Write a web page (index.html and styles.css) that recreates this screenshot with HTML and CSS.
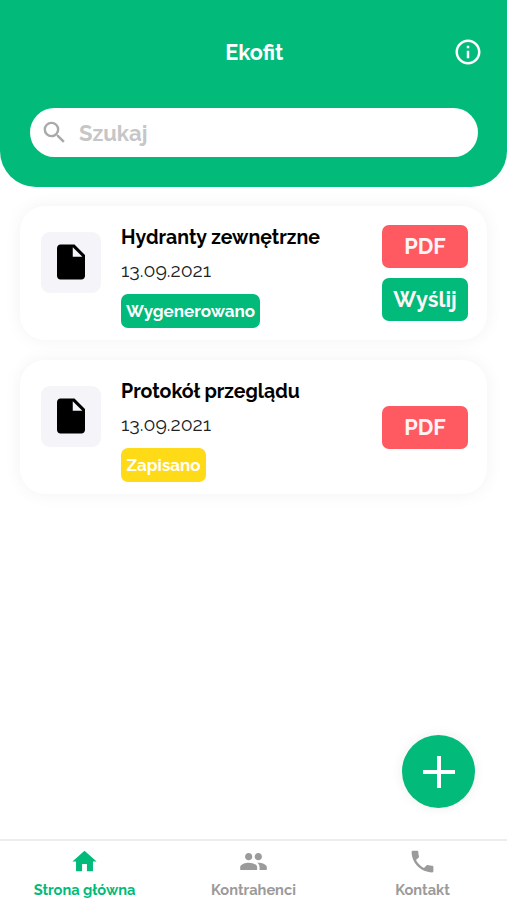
FILE: index.html
```html
<!DOCTYPE html>
<html lang="pl">
<head>
<meta charset="utf-8">
<title>Ekofit</title>
<link rel="stylesheet" href="styles.css">
</head>
<body>
<div class="app">
  <header class="header">
    <div class="titlebar">
      <h1 class="title">Ekofit</h1>
      <svg class="info" viewBox="0 0 24 24"><path d="M11 7h2v2h-2zm0 4h2v6h-2zm1-9C6.48 2 2 6.48 2 12s4.48 10 10 10 10-4.48 10-10S17.52 2 12 2zm0 18c-4.41 0-8-3.59-8-8s3.59-8 8-8 8 3.59 8 8-3.59 8-8 8z"/></svg>
    </div>
    <div class="search">
      <svg class="search-icon" viewBox="0 0 24 24"><path d="M15.5 14h-.79l-.28-.27A6.471 6.471 0 0 0 16 9.5 6.5 6.5 0 1 0 9.5 16c1.61 0 3.09-.59 4.23-1.57l.27.28v.79l5 4.99L20.49 19l-4.99-5zm-6 0C7.01 14 5 11.99 5 9.5S7.01 5 9.5 5 14 7.01 14 9.5 11.99 14 9.5 14z"/></svg>
      <span class="placeholder">Szukaj</span>
    </div>
  </header>
  <main class="list">
    <article class="card">
      <div class="thumb"><svg viewBox="0 0 24 24"><path d="M6 2c-1.1 0-1.99.9-1.99 2L4 20c0 1.1.89 2 1.99 2H18c1.1 0 2-.9 2-2V8l-6-6H6zm7 7V3.5L18.5 9H13z"/></svg></div>
      <div class="details">
        <h2 class="name">Hydranty zewnętrzne</h2>
        <div class="date">13.09.2021</div>
        <span class="badge generated">Wygenerowano</span>
      </div>
      <div class="actions">
        <div class="button pdf">PDF</div>
        <div class="button send">Wyślij</div>
      </div>
    </article>
    <article class="card">
      <div class="thumb"><svg viewBox="0 0 24 24"><path d="M6 2c-1.1 0-1.99.9-1.99 2L4 20c0 1.1.89 2 1.99 2H18c1.1 0 2-.9 2-2V8l-6-6H6zm7 7V3.5L18.5 9H13z"/></svg></div>
      <div class="details">
        <h2 class="name">Protokół przeglądu</h2>
        <div class="date">13.09.2021</div>
        <span class="badge saved">Zapisano</span>
      </div>
      <div class="actions">
        <div class="button pdf">PDF</div>
      </div>
    </article>
  </main>
  <div class="fab"><svg viewBox="0 0 32 32"><path d="M14 0h4v14h14v4H18v14h-4V18H0v-4h14z"/></svg></div>
  <nav class="tabs">
    <div class="tab active">
      <svg viewBox="0 0 24 24"><path d="M10 20v-6h4v6h5v-8h3L12 3 2 12h3v8z"/></svg>
      <span>Strona główna</span>
    </div>
    <div class="tab">
      <svg viewBox="0 0 24 24"><path d="M16 11c1.66 0 2.99-1.34 2.99-3S17.66 5 16 5s-3 1.34-3 3 1.34 3 3 3zm-8 0c1.66 0 2.99-1.34 2.99-3S9.66 5 8 5 5 6.34 5 8s1.34 3 3 3zm0 2c-2.33 0-7 1.17-7 3.5V19h14v-2.5C15 14.17 10.33 13 8 13zm8 0c-.29 0-.62.02-.97.05 1.16.84 1.97 1.97 1.97 3.45V19h6v-2.5c0-2.33-4.67-3.5-7-3.5z"/></svg>
      <span>Kontrahenci</span>
    </div>
    <div class="tab">
      <svg viewBox="0 0 24 24"><path d="M6.62 10.79c1.44 2.83 3.76 5.14 6.59 6.59l2.2-2.2c.27-.27.67-.36 1.02-.24 1.12.37 2.33.57 3.57.57.55 0 1 .45 1 1V20c0 .55-.45 1-1 1-9.39 0-17-7.61-17-17 0-.55.45-1 1-1h3.5c.55 0 1 .45 1 1 0 1.25.2 2.45.57 3.57.11.35.03.74-.25 1.02l-2.2 2.2z"/></svg>
      <span>Kontakt</span>
    </div>
  </nav>
</div>
</body>
</html>
```
FILE: styles.css
```css
* { box-sizing: border-box; }
body {
  margin: 0;
  background: #fff;
  color: #000;
  font-family: Raleway, Lato, "Open Sans", sans-serif;
  font-weight: 700;
}
svg { display: block; fill: currentColor; flex: none; }
h1, h2 { margin: 0; font-weight: 700; }
.app {
  position: relative;
  display: flex;
  flex-direction: column;
  height: 900px;
  overflow: hidden;
}
.header {
  height: 187px;
  padding: 37px 29px 0 30px;
  background: #02ba79;
  border-radius: 0 0 36px 36px;
  color: #fff;
}
.titlebar {
  display: grid;
  grid-template-columns: 30px 1fr 30px;
  align-items: start;
  height: 30px;
  margin-right: -4.5px;
  margin-bottom: 41px;
}
.title {
  grid-column: 2;
  font-size: 21.6px;
  line-height: 30px;
  text-align: center;
  padding: 1px 4px 0 0;
}
.info { width: 30px; height: 30px; }
.search {
  display: flex;
  align-items: center;
  gap: 10px;
  height: 49px;
  padding-left: 10px;
  border-radius: 25px;
  background: #fff;
}
.search-icon { width: 29px; height: 29px; color: #a9a9ac; }
.placeholder { color: #c6c6c8; font-size: 22px; line-height: 30px; }
.list {
  display: flex;
  flex-direction: column;
  gap: 20px;
  padding: 19px 20px 0;
}
.card {
  display: flex;
  height: 134px;
  padding: 0 19px 0 21px;
  border-radius: 25px;
  background: #fff;
  box-shadow: 0 0 18px rgba(40, 40, 80, .055);
}
.thumb {
  display: flex;
  justify-content: center;
  width: 60px;
  height: 61px;
  margin-top: 26px;
  padding-top: 9px;
  border-radius: 9px;
  background: #f5f4f8;
}
.thumb svg { width: 42px; height: 42px; }
.details {
  flex: 1;
  padding: 19px 0 0 20px;
  white-space: nowrap;
}
.name { font-size: 19.5px; line-height: 26px; }
.date {
  margin-top: 8px;
  font-size: 19.5px;
  font-weight: 400;
  line-height: 24px;
  color: #222;
}
.badge {
  display: flex;
  align-items: center;
  justify-content: center;
  height: 34px;
  margin-top: 11px;
  border-radius: 7px;
  color: #fff;
  font-size: 17px;
}
.generated { width: 139px; background: #02ba79; }
.saved { width: 85px; background: #ffda17; }
.actions {
  display: flex;
  flex-direction: column;
  justify-content: center;
  gap: 10px;
  width: 86px;
}
.button {
  display: flex;
  align-items: center;
  justify-content: center;
  height: 43px;
  border-radius: 7px;
  color: #fff4f5;
  font-size: 21.8px;
}
.pdf { background: #ff5a62; }
.send { background: #02ba79; }
.fab {
  position: absolute;
  left: 402px;
  top: 735px;
  display: flex;
  align-items: center;
  justify-content: center;
  width: 73px;
  height: 73px;
  border-radius: 50%;
  background: #02ba79;
  color: #fff;
  box-shadow: 0 0 12px rgba(40, 40, 40, .08);
}
.fab svg { width: 32px; height: 32px; }
.tabs {
  display: grid;
  grid-template-columns: repeat(3, 1fr);
  height: 61px;
  margin-top: auto;
  border-top: 2px solid #ededee;
  background: #fff;
}
.tab {
  display: flex;
  flex-direction: column;
  align-items: center;
  padding-top: 6px;
  color: #9b9b9b;
  font-size: 14.6px;
  line-height: 20px;
  white-space: nowrap;
}
.tab svg { width: 29px; height: 29px; margin-bottom: 4px; }
.active { color: #02ba79; }
```
